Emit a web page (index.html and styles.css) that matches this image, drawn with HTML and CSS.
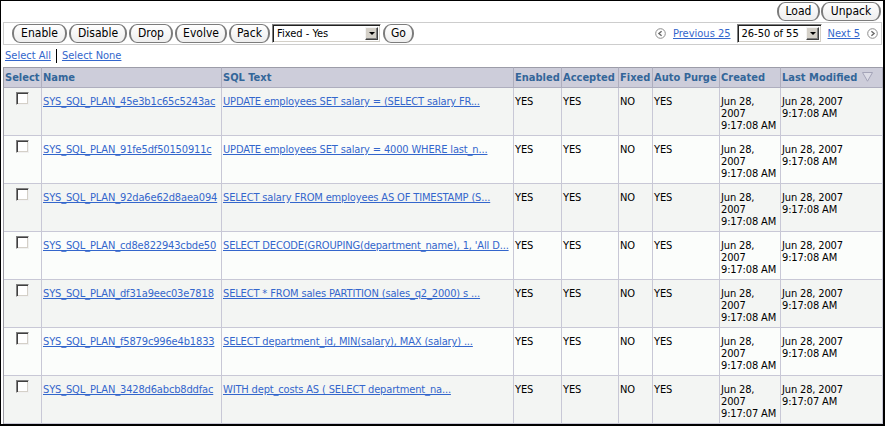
FILE: index.html
```html
<!DOCTYPE html>
<html>
<head>
<meta charset="utf-8">
<title>SQL Plan Baselines</title>
<link rel="stylesheet" href="styles.css">
</head>
<body>
<div class="frame">
  <div class="topbar">
    <span class="btn w-load">Load</span>
    <span class="btn w-unpack">Unpack</span>
  </div>
  <div class="toolbar">
    <div class="actions">
      <span class="btn w-enable">Enable</span>
      <span class="btn w-disable">Disable</span>
      <span class="btn w-drop">Drop</span>
      <span class="btn w-evolve">Evolve</span>
      <span class="btn w-pack">Pack</span>
      <span class="select w-fixed"><span class="sel-text">Fixed - Yes</span><span class="dd"></span></span>
      <span class="btn w-go">Go</span>
    </div>
    <div class="pager">
      <svg class="navicon" width="11" height="11" viewBox="0 0 11 11"><circle cx="5.5" cy="5.5" r="4.8" fill="#fff" stroke="#8c8c8c" stroke-width="1"/><path d="M6.6 3.2 L3.9 5.5 L6.6 7.8" fill="none" stroke="#6a6a6a" stroke-width="1.4"/></svg>
      <a class="link prev" href="#">Previous 25</a>
      <span class="select w-range"><span class="sel-text">26-50 of 55</span><span class="dd"></span></span>
      <a class="link next" href="#">Next 5</a>
      <svg class="navicon" width="11" height="11" viewBox="0 0 11 11"><circle cx="5.5" cy="5.5" r="4.8" fill="#fff" stroke="#8c8c8c" stroke-width="1"/><path d="M4.4 3.2 L7.1 5.5 L4.4 7.8" fill="none" stroke="#6a6a6a" stroke-width="1.4"/></svg>
    </div>
  </div>
  <div class="selrow">
    <a class="link" href="#">Select All</a><span class="sep"></span><a class="link" href="#">Select None</a>
  </div>
  <table class="grid">
    <thead>
      <tr>
        <th class="c-sel">Select</th>
        <th class="c-name">Name</th>
        <th class="c-sql">SQL Text</th>
        <th class="c-en">Enabled</th>
        <th class="c-acc">Accepted</th>
        <th class="c-fix">Fixed</th>
        <th class="c-ap">Auto Purge</th>
        <th class="c-cr">Created</th>
        <th class="c-lm">Last Modified <svg class="sort" width="11" height="10" viewBox="0 0 11 10"><polygon points="0.5,0.5 10.5,0.5 5.5,9.2" fill="#dcdce6" stroke="#a4a4b8" stroke-width="1"/></svg></th>
      </tr>
    </thead>
    <tbody>
      <tr class="odd">
        <td class="cbcell"><span class="cb"></span></td>
        <td><a class="link" href="#">SYS_SQL_PLAN_45e3b1c65c5243ac</a></td>
        <td><a class="link" href="#">UPDATE employees SET salary = (SELECT salary FR...</a></td>
        <td>YES</td><td>YES</td><td>NO</td><td>YES</td>
        <td>Jun 28,<br>2007<br>9:17:08 AM</td>
        <td>Jun 28, 2007<br>9:17:08 AM</td>
      </tr>
      <tr class="even">
        <td class="cbcell"><span class="cb"></span></td>
        <td><a class="link" href="#">SYS_SQL_PLAN_91fe5df50150911c</a></td>
        <td><a class="link" href="#">UPDATE employees SET salary = 4000 WHERE last_n...</a></td>
        <td>YES</td><td>YES</td><td>NO</td><td>YES</td>
        <td>Jun 28,<br>2007<br>9:17:08 AM</td>
        <td>Jun 28, 2007<br>9:17:08 AM</td>
      </tr>
      <tr class="odd">
        <td class="cbcell"><span class="cb"></span></td>
        <td><a class="link" href="#">SYS_SQL_PLAN_92da6e62d8aea094</a></td>
        <td><a class="link" href="#">SELECT salary FROM employees AS OF TIMESTAMP (S...</a></td>
        <td>YES</td><td>YES</td><td>NO</td><td>YES</td>
        <td>Jun 28,<br>2007<br>9:17:08 AM</td>
        <td>Jun 28, 2007<br>9:17:08 AM</td>
      </tr>
      <tr class="even">
        <td class="cbcell"><span class="cb"></span></td>
        <td><a class="link" href="#">SYS_SQL_PLAN_cd8e822943cbde50</a></td>
        <td><a class="link" href="#">SELECT DECODE(GROUPING(department_name), 1, 'All D...</a></td>
        <td>YES</td><td>YES</td><td>NO</td><td>YES</td>
        <td>Jun 28,<br>2007<br>9:17:08 AM</td>
        <td>Jun 28, 2007<br>9:17:08 AM</td>
      </tr>
      <tr class="odd">
        <td class="cbcell"><span class="cb"></span></td>
        <td><a class="link" href="#">SYS_SQL_PLAN_df31a9eec03e7818</a></td>
        <td><a class="link" href="#">SELECT * FROM sales PARTITION (sales_q2_2000) s ...</a></td>
        <td>YES</td><td>YES</td><td>NO</td><td>YES</td>
        <td>Jun 28,<br>2007<br>9:17:08 AM</td>
        <td>Jun 28, 2007<br>9:17:08 AM</td>
      </tr>
      <tr class="even">
        <td class="cbcell"><span class="cb"></span></td>
        <td><a class="link" href="#">SYS_SQL_PLAN_f5879c996e4b1833</a></td>
        <td><a class="link" href="#">SELECT department_id, MIN(salary), MAX (salary) ...</a></td>
        <td>YES</td><td>YES</td><td>NO</td><td>YES</td>
        <td>Jun 28,<br>2007<br>9:17:08 AM</td>
        <td>Jun 28, 2007<br>9:17:08 AM</td>
      </tr>
      <tr class="odd">
        <td class="cbcell"><span class="cb"></span></td>
        <td><a class="link" href="#">SYS_SQL_PLAN_3428d6abcb8ddfac</a></td>
        <td><a class="link" href="#">WITH dept_costs AS ( SELECT department_na...</a></td>
        <td>YES</td><td>YES</td><td>NO</td><td>YES</td>
        <td>Jun 28,<br>2007<br>9:17:07 AM</td>
        <td>Jun 28, 2007<br>9:17:07 AM</td>
      </tr>
      <tr class="even filler">
        <td></td><td></td><td></td><td></td><td></td><td></td><td></td><td></td><td></td>
      </tr>
    </tbody>
  </table>
</div>
</body>
</html>
```

FILE: styles.css
```css
html, body {
  margin: 0;
  padding: 0;
  background: #fff;
}
body {
  font-family: "DejaVu Sans Condensed", "DejaVu Sans", sans-serif;
  font-size: 11px;
  color: #000;
}
.frame {
  width: 885px;
  height: 426px;
  box-sizing: border-box;
  border-style: solid;
  border-color: #000;
  border-width: 1px 2px 2px 1px;
  padding: 0 1px 0 2px;
  overflow: hidden;
  background: #fff;
}
.topbar {
  height: 21px;
  box-sizing: border-box;
  padding: 1px 1px 0 0;
  display: flex;
  justify-content: flex-end;
  gap: 1px;
}
.btn {
  display: inline-flex;
  align-items: center;
  justify-content: center;
  box-sizing: border-box;
  height: 19px;
  border: 1px solid #7c7c7c;
  border-left-width: 2px;
  border-right-width: 2px;
  border-radius: 8px / 9px;
  background: linear-gradient(#ffffff, #eeeeee);
  font-size: 12px;
  line-height: 15px;
  color: #000;
  white-space: nowrap;
}
.w-load { width: 43px; }
.w-unpack { width: 60px; }
.w-enable { width: 55px; }
.w-disable { width: 58px; }
.w-drop { width: 44px; }
.w-evolve { width: 52px; }
.w-pack { width: 41px; }
.w-go { width: 31px; }
.toolbar {
  height: 23px;
  box-sizing: border-box;
  border: 1px solid #cdcdcd;
  padding: 1px 3px 0 8px;
  display: flex;
  justify-content: space-between;
  align-items: flex-start;
}
.actions {
  display: flex;
  align-items: center;
  gap: 2px;
  height: 19px;
}
.select {
  display: inline-flex;
  align-items: center;
  box-sizing: border-box;
  height: 19px;
  border: 1px solid;
  border-color: #808080 #ffffff #ffffff #808080;
  box-shadow: inset 1px 1px 0 #202020, inset -1px -1px 0 #d4d0c8;
  background: #fff;
  padding: 0 2px 0 4px;
  font-size: 11px;
  line-height: 12px;
  justify-content: space-between;
}
.w-fixed { width: 109px; }
.w-range { width: 85px; }
.dd {
  position: relative;
  width: 13px;
  height: 13px;
  box-sizing: border-box;
  background: #d4d0c8;
  border: 1px solid;
  border-color: #f4f4f4 #404040 #404040 #f4f4f4;
  box-shadow: inset -1px -1px 0 #808080;
}
.dd::after {
  content: "";
  position: absolute;
  left: 3px;
  top: 4px;
  border-left: 3px solid transparent;
  border-right: 3px solid transparent;
  border-top: 3px solid #000;
}
.pager {
  display: flex;
  align-items: center;
  height: 19px;
}
.navicon { display: block; }
.pager .prev { margin-left: 7px; margin-right: 6px; }
.pager .next { margin-left: 6px; margin-right: 7px; }
.link {
  color: #3366cc;
  text-decoration: underline;
  white-space: nowrap;
}
.selrow {
  height: 22px;
  box-sizing: border-box;
  padding: 5px 0 0 2px;
  line-height: 12px;
  display: flex;
  align-items: flex-start;
}
.sep {
  display: inline-block;
  width: 1px;
  height: 14px;
  background: #000;
  margin: -1px 5px 0 5px;
}
.grid {
  table-layout: fixed;
  width: 879px;
  border-collapse: separate;
  border-spacing: 0;
  border-left: 1px solid #9c9ca4;
}
.grid th {
  box-sizing: border-box;
  background: #cdcdda;
  color: #336699;
  font-weight: bold;
  text-align: left;
  padding: 4px 1px 3px 1px;
  line-height: 12px;
  border-top: 1px solid #9c9ca8;
  border-right: 1px solid #aeaebe;
  border-bottom: 1px solid #aeaebe;
  white-space: nowrap;
  overflow: hidden;
}
.c-sel { width: 38px; }
.c-name { width: 180px; }
.c-sql { width: 292px; }
.c-en { width: 48px; }
.c-acc { width: 57px; }
.c-fix { width: 34px; }
.c-ap { width: 67px; }
.c-cr { width: 61px; }
.c-lm { width: 102px; }
.sort {
  display: inline-block;
  vertical-align: -1px;
  margin-left: 1px;
}
.grid td {
  padding: 8px 1px 3px 1px;
  vertical-align: top;
  line-height: 12px;
  letter-spacing: -0.15px;
  border-right: 1px solid #c8c8d6;
  border-bottom: 1px solid #c8c8d6;
  white-space: nowrap;
  overflow: hidden;
}
.grid tr.odd td { background: #f3f5f3; }
.grid tr.even td { background: #fbfdfb; }
.grid tr.filler td { height: 36px; }
.grid td.cbcell {
  padding-top: 4px;
  text-align: center;
}
.cb {
  display: block;
  margin: 0 auto;
  width: 13px;
  height: 13px;
  box-sizing: border-box;
  border: 1px solid;
  border-color: #808080 #f0f0f0 #f0f0f0 #808080;
  box-shadow: inset 1px 1px 0 #404040, inset -1px -1px 0 #d4d0c8;
  background: #fff;
}
```
